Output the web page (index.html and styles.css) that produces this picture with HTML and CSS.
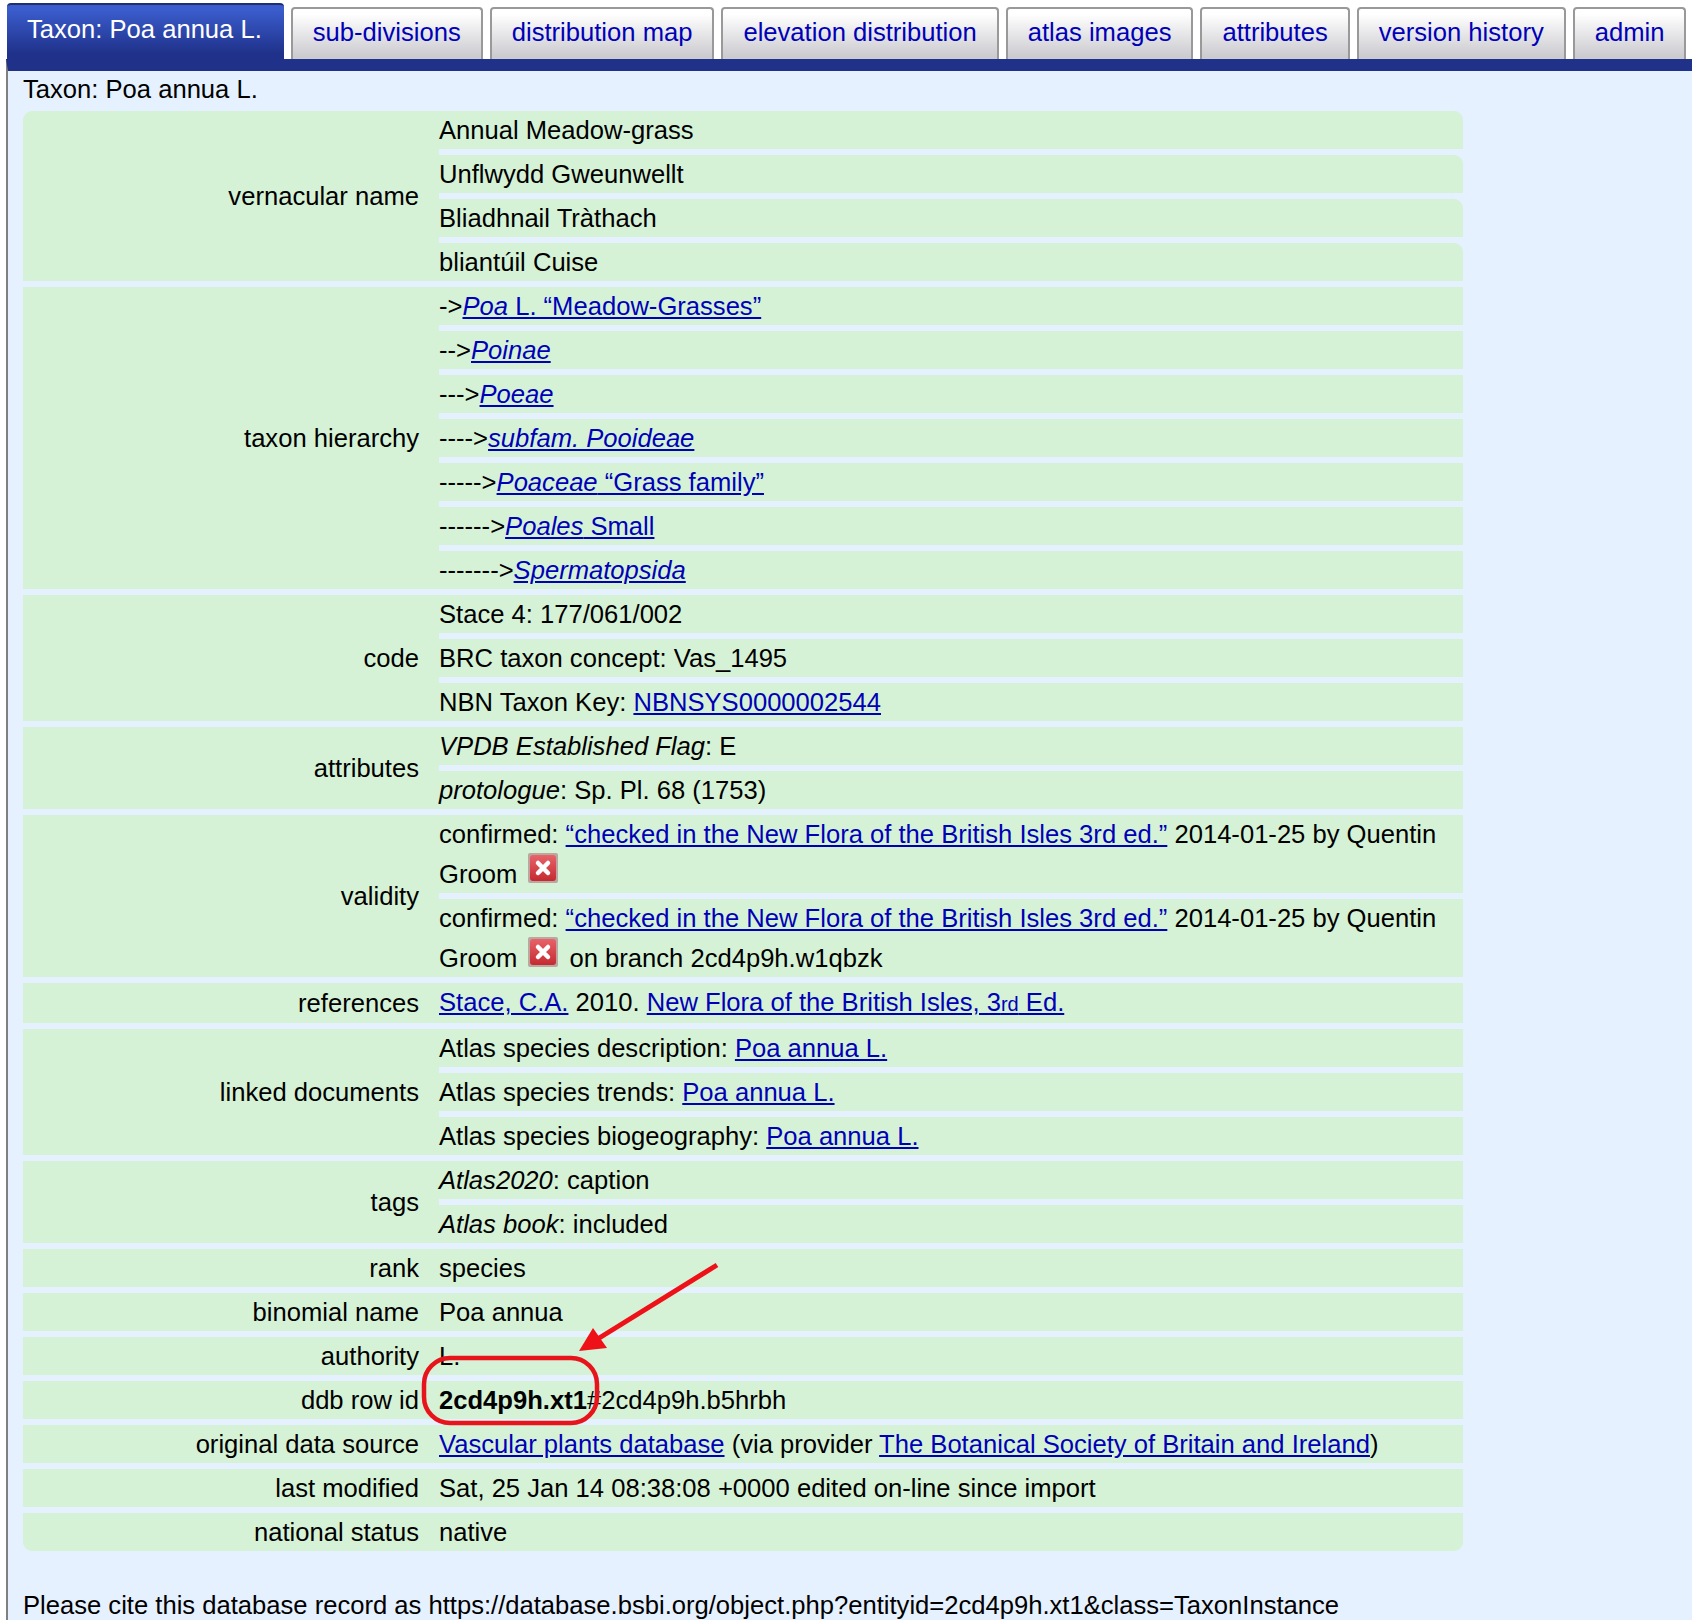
FILE: index.html
```html
<!DOCTYPE html>
<html lang="en">
<head>
    <meta charset="UTF-8">
    <meta name="viewport" content="width=device-width, initial-scale=1.0">
    <title>Taxon: Poa annua L.</title>
    <link rel="stylesheet" href="styles.css">
</head>
<body>

<div class="tabs">
    <a class="tab active">Taxon: Poa annua L.</a>
    <a class="tab">sub-divisions</a>
    <a class="tab">distribution map</a>
    <a class="tab">elevation distribution</a>
    <a class="tab">atlas images</a>
    <a class="tab">attributes</a>
    <a class="tab">version history</a>
    <a class="tab">admin</a>
</div>

<div class="panel">
    <p class="heading">Taxon: Poa annua L.</p>

    <div class="record">
        <div class="group">
            <div class="label">vernacular name</div>
            <div class="values">
                <div class="value">Annual Meadow-grass</div>
                <div class="value">Unflwydd Gweunwellt</div>
                <div class="value">Bliadhnail Tràthach</div>
                <div class="value">bliantúil Cuise</div>
            </div>
        </div>

        <div class="group">
            <div class="label">taxon hierarchy</div>
            <div class="values">
                <div class="value">-&gt;<a href="#"><i>Poa</i> L. “Meadow-Grasses”</a></div>
                <div class="value">--&gt;<a href="#"><i>Poinae</i></a></div>
                <div class="value">---&gt;<a href="#"><i>Poeae</i></a></div>
                <div class="value">----&gt;<a href="#"><i>subfam. Pooideae</i></a></div>
                <div class="value">-----&gt;<a href="#"><i>Poaceae</i> “Grass family”</a></div>
                <div class="value">------&gt;<a href="#"><i>Poales</i> Small</a></div>
                <div class="value">-------&gt;<a href="#"><i>Spermatopsida</i></a></div>
            </div>
        </div>

        <div class="group">
            <div class="label">code</div>
            <div class="values">
                <div class="value">Stace 4: 177/061/002</div>
                <div class="value">BRC taxon concept: Vas_1495</div>
                <div class="value">NBN Taxon Key: <a href="#">NBNSYS0000002544</a></div>
            </div>
        </div>

        <div class="group">
            <div class="label">attributes</div>
            <div class="values">
                <div class="value"><i>VPDB Established Flag</i>: E</div>
                <div class="value"><i>protologue</i>: Sp. Pl. 68 (1753)</div>
            </div>
        </div>

        <div class="group">
            <div class="label">validity</div>
            <div class="values">
                <div class="value">confirmed: <a href="#">“checked in the New Flora of the British Isles 3rd ed.”</a> 2014-01-25 by Quentin Groom
                    <svg class="del-icon" viewBox="0 0 30 30"><use href="#del"/></svg>
                </div>
                <div class="value">confirmed: <a href="#">“checked in the New Flora of the British Isles 3rd ed.”</a> 2014-01-25 by Quentin Groom
                    <svg class="del-icon" viewBox="0 0 30 30"><use href="#del"/></svg> on branch 2cd4p9h.w1qbzk
                </div>
            </div>
        </div>

        <div class="group">
            <div class="label">references</div>
            <div class="values">
                <div class="value"><a href="#">Stace, C.A.</a> 2010. <a href="#">New Flora of the British Isles, 3<small>rd</small> Ed.</a></div>
            </div>
        </div>

        <div class="group">
            <div class="label">linked documents</div>
            <div class="values">
                <div class="value">Atlas species description: <a href="#">Poa annua L.</a></div>
                <div class="value">Atlas species trends: <a href="#">Poa annua L.</a></div>
                <div class="value">Atlas species biogeography: <a href="#">Poa annua L.</a></div>
            </div>
        </div>

        <div class="group">
            <div class="label">tags</div>
            <div class="values">
                <div class="value"><i>Atlas2020</i>: caption</div>
                <div class="value"><i>Atlas book</i>: included</div>
            </div>
        </div>

        <div class="group">
            <div class="label">rank</div>
            <div class="values"><div class="value">species</div></div>
        </div>
        <div class="group">
            <div class="label">binomial name</div>
            <div class="values"><div class="value">Poa annua</div></div>
        </div>
        <div class="group">
            <div class="label">authority</div>
            <div class="values"><div class="value">L.</div></div>
        </div>
        <div class="group">
            <div class="label">ddb row id</div>
            <div class="values"><div class="value"><b>2cd4p9h.xt1</b>#2cd4p9h.b5hrbh</div></div>
        </div>
        <div class="group">
            <div class="label">original data source</div>
            <div class="values"><div class="value"><a href="#">Vascular plants database</a> (via provider <a href="#">The Botanical Society of Britain and Ireland</a>)</div></div>
        </div>
        <div class="group">
            <div class="label">last modified</div>
            <div class="values"><div class="value">Sat, 25 Jan 14 08:38:08 +0000 edited on-line since import</div></div>
        </div>
        <div class="group">
            <div class="label">national status</div>
            <div class="values"><div class="value">native</div></div>
        </div>
    </div>

    <p class="cite">Please cite this database record as https://database.bsbi.org/object.php?entityid=2cd4p9h.xt1&amp;class=TaxonInstance</p>
</div>

<!-- red annotation drawn over the screenshot -->
<svg class="annotation" viewBox="0 0 1692 1620">
    <rect x="424" y="1358" width="173" height="65" rx="26" fill="none" stroke="#e8141c" stroke-width="4.5"/>
    <line x1="717" y1="1265" x2="596" y2="1340" stroke="#ee1118" stroke-width="5"/>
    <polygon points="579,1351 593,1328 607,1348" fill="#ee1118"/>
</svg>

<svg class="defs" width="0" height="0">
    <defs>
        <linearGradient id="del-fill" x1="0" y1="0" x2="0" y2="1">
            <stop offset="0" stop-color="#e8636a"/>
            <stop offset="1" stop-color="#c42a30"/>
        </linearGradient>
        <g id="del">
            <rect x="0" y="0" width="30" height="30" rx="2" fill="#b9a7a0"/>
            <rect x="2" y="2" width="26" height="26" rx="3" fill="url(#del-fill)"/>
            <path d="M10 10 L20 20 M20 10 L10 20" stroke="#fff" stroke-width="4.5" stroke-linecap="round"/>
        </g>
    </defs>
</svg>

</body>
</html>
```

FILE: styles.css
```css
* {
    box-sizing: border-box;
}

body {
    font-family: 'Liberation Sans', Arial, sans-serif;
    font-size: 25.6px;
    line-height: 38px;
    color: #000;
    background-color: #fff;
    margin: 0;
    min-height: 1620px;
    display: flex;
    flex-direction: column;
    position: relative;
    overflow-x: hidden;
}

a {
    color: #0000b8;
}

.tabs {
    display: flex;
    align-items: flex-end;
    gap: 7px;
    margin-left: 7px;
    padding-top: 3px;
    height: 59px;
}

.tab {
    height: 52px;
    line-height: 46px;
    padding: 0 20px;
    white-space: nowrap;
    border: 2px solid #999;
    border-bottom: none;
    border-radius: 4px 4px 0 0;
    background: linear-gradient(#fff 10%, #cbcbd0 95%);
}

.tab.active {
    height: 56px;
    line-height: 48px;
    padding: 0 22px 0 20px;
    color: #fff;
    border: none;
    border-top: 2px solid #1d2f6f;
    background: linear-gradient(#3a5ccc 10%, #1f318a 90%);
}

.panel {
    flex: 1;
    margin-left: 6px;
    padding: 0 0 0 15px;
    border-top: 12px solid #1f3188;
    border-left: 2px solid #808080;
    background-color: #e6f1ff;
    overflow: hidden;
}

.heading {
    margin: 0;
    height: 40px;
    line-height: 37px;
}

.record {
    width: 1440px;
    display: flex;
    flex-direction: column;
    gap: 6px;
}

.group {
    display: flex;
    background-color: #d6f2d6;
}

.group:first-child {
    border-radius: 9px 9px 0 0;
}

.group:last-child {
    border-radius: 0 0 9px 9px;
}

.label {
    flex: 0 0 416px;
    padding-right: 20px;
    display: flex;
    align-items: center;
    justify-content: flex-end;
}

.values {
    flex: 1;
    display: flex;
    flex-direction: column;
    gap: 6px;
    background-color: #e6f1ff;
}

.group:first-child .values {
    border-radius: 0 9px 0 0;
}

.group:last-child .values {
    border-radius: 0 0 9px 0;
}

.value {
    min-height: 38px;
    padding-right: 8px;
    background-color: #d6f2d6;
    border-radius: inherit;
}

.value small {
    font-size: 20px;
}

.del-icon {
    width: 30px;
    height: 30px;
    margin-left: 4px;
    margin-right: 4px;
}

.cite {
    margin: 35px 0 0;
    white-space: nowrap;
}

.annotation {
    position: absolute;
    left: 0;
    top: 0;
    width: 1692px;
    height: 1620px;
    pointer-events: none;
}

.defs {
    position: absolute;
}
```
